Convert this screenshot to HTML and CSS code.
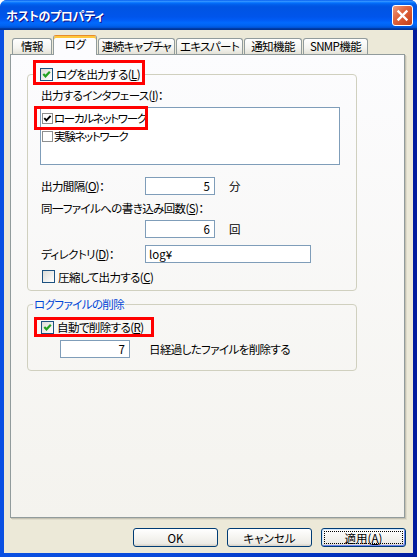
FILE: index.html
```html
<!DOCTYPE html>
<html lang="ja">
<head>
    <meta charset="UTF-8">
    <title>ホストのプロパティ</title>
    <link rel="stylesheet" href="styles.css">
</head>
<body>
    <div class="window">
        <div class="titlebar">
            <span class="title">ホストのプロパティ</span>
            <span class="close">
                <svg viewBox="0 0 19 19" width="19" height="19"><path d="M5.5 5.5 L13.5 13.5 M13.5 5.5 L5.5 13.5" stroke="#fff" stroke-width="2.4" stroke-linecap="square"/></svg>
            </span>
        </div>

        <div class="client">
            <div class="tabs">
                <div class="tab tab-info">情報</div>
                <div class="tab tab-log tab-active">ログ</div>
                <div class="tab tab-capture">連続キャプチャ</div>
                <div class="tab tab-expert">エキスパート</div>
                <div class="tab tab-notify">通知機能</div>
                <div class="tab tab-snmp">SNMP機能</div>
            </div>

            <div class="panel">
                <fieldset class="group group-log">
                    <legend class="legend-mark">
                        <span class="mark mark-log">
                            <span class="cb"><svg class="tick" viewBox="0 0 11 11" width="11" height="11"><path d="M2.3 5 L4.5 7.3 L8.8 2.8" fill="none" stroke="#21A121" stroke-width="2.2"/></svg></span>
                            <span>ログを出力する(<u>L</u>)</span>
                        </span>
                    </legend>
                    <div class="group-body">
                        <div class="caption">出力するインタフェース(<u>I</u>)：</div>
                        <div class="listbox">
                            <div class="mark-item"></div>
                            <div class="list-item">
                                <span class="lcb"><svg viewBox="0 0 9 9" width="9" height="9"><path d="M1.3 4.2 L3.4 6.4 L7.6 1.8" fill="none" stroke="#000" stroke-width="1.9"/></svg></span>
                                <span>ローカルネットワーク</span>
                            </div>
                            <div class="list-item">
                                <span class="lcb"></span>
                                <span>実験ネットワーク</span>
                            </div>
                        </div>

                        <div class="field-row row-interval">
                            <span class="field-label">出力間隔(<u>O</u>)：</span>
                            <input class="text num" type="text" value="5">
                            <span class="unit">分</span>
                        </div>

                        <div class="caption caption-count">同一ファイルへの書き込み回数(<u>S</u>)：</div>
                        <div class="field-row row-count">
                            <input class="text num" type="text" value="6">
                            <span class="unit">回</span>
                        </div>

                        <div class="field-row row-dir">
                            <span class="field-label">ディレクトリ(<u>D</u>)：</span>
                            <input class="text dir" type="text" value="log¥">
                        </div>

                        <div class="check-row row-compress">
                            <span class="cb"></span>
                            <span>圧縮して出力する(<u>C</u>)</span>
                        </div>
                    </div>
                </fieldset>

                <fieldset class="group group-delete">
                    <legend class="legend-text">ログファイルの削除</legend>
                    <div class="mark mark-auto">
                        <span class="cb"><svg class="tick" viewBox="0 0 11 11" width="11" height="11"><path d="M2.3 5 L4.5 7.3 L8.8 2.8" fill="none" stroke="#21A121" stroke-width="2.2"/></svg></span>
                        <span>自動で削除する(<u>R</u>)</span>
                    </div>
                    <div class="field-row row-days">
                        <input class="text num" type="text" value="7">
                        <span class="days-text">日経過したファイルを削除する</span>
                    </div>
                </fieldset>
            </div>

            <div class="buttons">
                <button class="btn">OK</button>
                <button class="btn">キャンセル</button>
                <button class="btn btn-default">適用(<u>A</u>)</button>
            </div>
        </div>
    </div>
</body>
</html>
```

FILE: styles.css
```css
* {
    margin: 0;
    padding: 0;
    box-sizing: border-box;
}

body {
    width: 417px;
    height: 557px;
    overflow: hidden;
    background: #fff;
    font-family: "Noto Sans CJK JP", "Noto Sans", sans-serif;
    font-size: 11.5px;
    line-height: 14px;
    letter-spacing: -0.6px;
    color: #000;
    font-feature-settings: "palt";
}

.window {
    width: 417px;
    height: 557px;
    display: flex;
    flex-direction: column;
    border-radius: 7px 7px 0 0;
    overflow: hidden;
    background: linear-gradient(to right, #0A50E2 0%, #0848DA 40%, #0030BC 80%, #001B9E 100%);
}

.titlebar {
    height: 30px;
    flex: none;
    display: flex;
    align-items: center;
    justify-content: space-between;
    padding: 1px 4px 0 6px;
    background: linear-gradient(to bottom, #0058EE 0%, #3593FF 4%, #288EFF 6%, #127DFF 8%, #036FFC 10%, #0262EE 14%, #0057E5 20%, #0054E3 24%, #0055EB 56%, #005BF5 66%, #026AFE 76%, #0062EF 86%, #0052D6 92%, #0040AB 94%, #003092 100%);
}

.title {
    color: #fff;
    font-weight: bold;
    font-size: 12px;
    letter-spacing: -0.3px;
    text-shadow: 1px 1px #0F1089;
}

.close {
    width: 21px;
    height: 21px;
    display: flex;
    border: 1px solid #fff;
    border-radius: 3px;
    background: linear-gradient(135deg, #EE9C80 0%, #E0663F 40%, #D3512A 70%, #C0401C 100%);
}

.client {
    flex: 1;
    margin: 0 4px 4px;
    padding: 5px 8px 6px 6px;
    background: #ECE9D8;
    display: flex;
    flex-direction: column;
}

/* tabs */

.tabs {
    display: flex;
    align-items: flex-end;
    gap: 1px;
    height: 20px;
    margin-bottom: -1px;
    padding-left: 2px;
    position: relative;
    z-index: 1;
}

.tab {
    height: 16px;
    margin-bottom: 1px;
    border: 1px solid #919B9C;
    border-bottom: none;
    border-radius: 3px 3px 0 0;
    background: linear-gradient(#FFFFFF, #F4F4F0 60%, #E4E2D7);
    text-align: center;
    line-height: 15px;
    white-space: nowrap;
}

.tab-active {
    height: 20px;
    margin-bottom: 0;
    padding-top: 1px;
    border-top-color: #E68B2C;
    background: #FCFCFE;
    box-shadow: inset 0 2px 0 #FFC73C;
}

.tab-info { width: 40px; }
.tab-log { width: 44px; }
.tab-capture { width: 77px; }
.tab-expert { width: 67px; }
.tab-notify { width: 58px; }
.tab-snmp { width: 65px; }

.panel {
    height: 464px;
    flex: none;
    border: 1px solid #919B9C;
    background: linear-gradient(#FCFCFE, #F4F3EE);
    box-shadow: 1px 1px 0 #C5C2B2, 2px 2px 0 #DEDBCB;
    padding: 5px 0 0 16px;
}

/* group boxes */

.group {
    width: 330px;
    border: 1px solid #D0D0BF;
    border-radius: 4px;
    padding: 0 0 7px 5px;
}

.group legend {
    padding: 0;
}

.legend-mark {
    padding-bottom: 3px !important;
}

.legend-text {
    padding: 0 1px !important;
    color: #0046D5;
}

.group-delete {
    margin-top: 6px;
    padding-bottom: 12px;
}

.mark {
    display: flex;
    align-items: center;
    width: fit-content;
    white-space: nowrap;
    border: 3px solid #FF0000;
}

.mark-log {
    height: 25px;
    padding: 4px 2px 1px 4px;
}

.mark-auto {
    height: 20px;
    margin: 6px 0 0 1px;
    padding: 0 8px 0 4px;
}

.cb {
    width: 13px;
    height: 13px;
    flex: none;
    display: flex;
    margin-right: 3px;
    border: 1px solid #1C5180;
    background: linear-gradient(135deg, #DCDCD7, #FFFFFF);
}

.group-body {
    padding-left: 8px;
}

.caption {
    height: 14px;
    white-space: nowrap;
}

.listbox {
    position: relative;
    width: 300px;
    height: 58px;
    margin: 5px 0 0 -1px;
    padding-top: 1px;
    border: 1px solid #7F9DB9;
    background: #fff;
}

.list-item {
    display: flex;
    align-items: center;
    height: 18px;
    padding-left: 1px;
    letter-spacing: -1.3px;
    white-space: nowrap;
}

.lcb {
    width: 11px;
    height: 11px;
    flex: none;
    display: flex;
    margin-right: 1px;
    border: 1px solid #8E8F8F;
    background: #fff;
}

.mark-item {
    position: absolute;
    left: -7px;
    top: -2px;
    width: 114px;
    height: 24px;
    border: 3px solid #FF0000;
}

.field-row {
    display: flex;
    align-items: center;
    height: 18px;
    white-space: nowrap;
}

.field-label {
    width: 104px;
    flex: none;
}

.text {
    height: 18px;
    border: 1px solid #7F9DB9;
    background: #fff;
    font: inherit;
    letter-spacing: 0;
    color: #000;
    padding: 0 3px;
    outline: none;
}

.num {
    width: 70px;
    text-align: right;
    padding-right: 4px;
}

.dir {
    width: 166px;
}

.unit {
    margin-left: 14px;
}

.row-interval { margin-top: 12px; }
.caption-count { margin-top: 6px; }
.row-count { margin-top: 5px; padding-left: 104px; }
.row-dir { margin-top: 7px; }

.check-row {
    display: flex;
    align-items: center;
    height: 13px;
    white-space: nowrap;
}

.row-compress {
    margin: 7px 0 0 1px;
}

.row-days {
    margin: 3px 0 0 27px;
}

.days-text {
    margin-left: 19px;
}

/* buttons */

.buttons {
    display: flex;
    justify-content: flex-end;
    gap: 9px;
    margin: 10px -1px 0 0;
}

.btn {
    width: 85px;
    height: 19px;
    border: 1px solid #003C74;
    border-radius: 3px;
    background: linear-gradient(#FFFFFF, #F5F4F0 50%, #ECEBE6 85%, #D6D0C5);
    font: inherit;
    color: #000;
}

.btn-default {
    box-shadow: inset 1px 1px 0 #CEE7FF, inset -1px -1px 0 #6982EE;
    outline: 1px dotted #000;
    outline-offset: -4px;
}
```
